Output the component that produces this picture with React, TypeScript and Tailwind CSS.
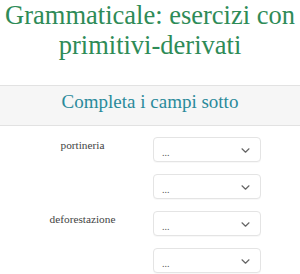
import React from "react";

function Select() {
  return (
    <div className="flex h-[25px] w-[108px] items-center justify-between rounded-[4px] border border-[#e4e4e4] bg-white pl-[8px] pr-[10px] shadow-[0_1px_1px_rgba(0,0,0,0.03)]">
      <span className="mt-[7px] text-[10px] leading-none text-[#555]">...</span>
      <svg width="9" height="5" viewBox="0 0 9 5" fill="none" className="mt-[1px]">
        <path d="M1 0.8l3.5 3.4 3.5-3.4" stroke="#666" strokeWidth="1.2" strokeLinecap="round" strokeLinejoin="round" />
      </svg>
    </div>
  );
}

function Row({ label }: { label: string }) {
  return (
    <div className="flex flex-col gap-[12px]">
      <div className="flex items-start">
        <div className="w-[153px] pl-[12px] pt-[1px] text-center text-[11.3px] leading-[14px] text-[#444]">{label}</div>
        <Select />
      </div>
      <div className="flex items-start">
        <div className="w-[153px]" />
        <Select />
      </div>
    </div>
  );
}

export default function App() {
  return (
    <div className="h-[274px] w-[300px] overflow-hidden bg-white" style={{ fontFamily: '"Liberation Serif", serif' }}>
      <h1 className="text-center text-[26.5px] text-[#2e8b57]">
        <span className="block leading-[30px]">Grammaticale: esercizi con</span>
        <span className="block leading-[31px]">primitivi-derivati</span>
      </h1>
      <div className="mt-[24px] h-[41px] border-y border-[#e2e2e2] bg-[#f6f6f6] pt-[6px] text-center text-[19px] leading-[19px] text-[#2a8a9b]">
        Completa i campi sotto
      </div>
      <div className="mt-[11px] flex flex-col gap-[12px]">
        <Row label="portineria" />
        <Row label="deforestazione" />
      </div>
    </div>
  );
}
